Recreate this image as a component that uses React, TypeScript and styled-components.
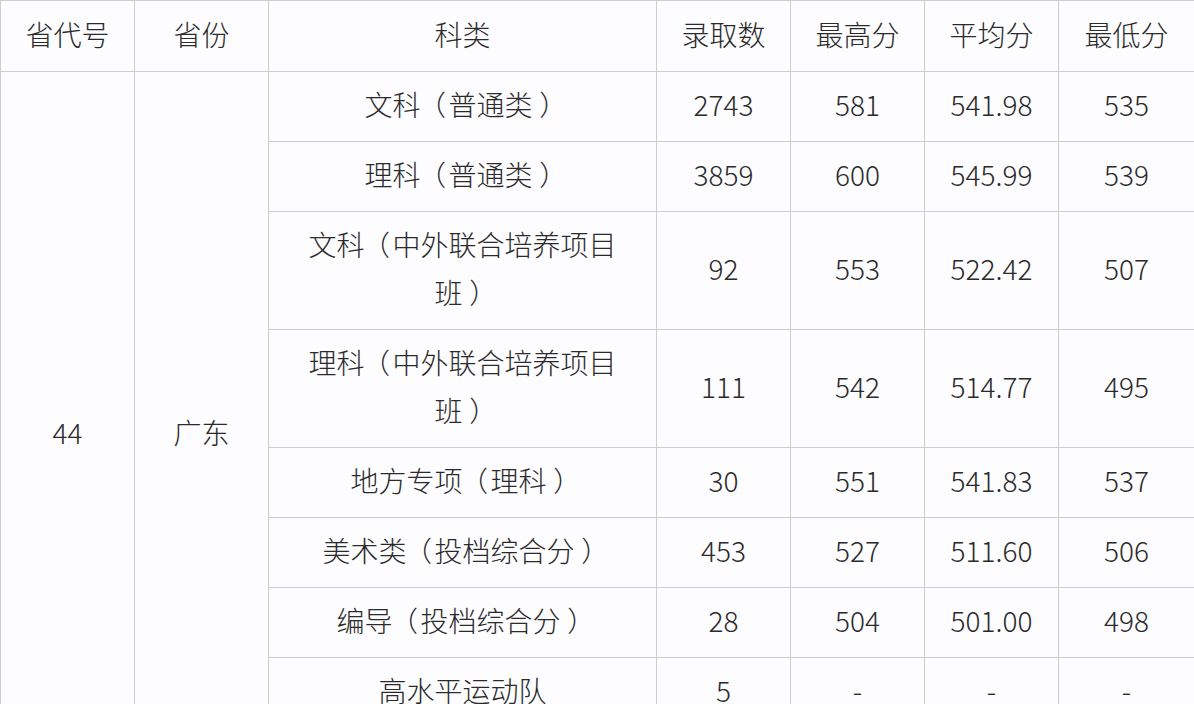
import React from "react";
import styled, { createGlobalStyle } from "styled-components";

const Global = createGlobalStyle`
  html, body { margin: 0; padding: 0; background: #fdfcfe; overflow: hidden; }
  body { font-family: "Noto Sans CJK SC", "Noto Sans", sans-serif; color: #2a2a2a; }
`;

const Table = styled.table`
  width: 1194px;
  border-collapse: collapse;
  table-layout: fixed;
  background: #fdfcfe;
`;

const Cell = styled.td<{ $wide?: boolean }>`
  border: 1px solid #cecbd2;
  padding: 8px ${(p) => (p.$wide ? "30px" : "4px")} 13px;
  font-size: 28px;
  line-height: 48px;
  text-align: center;
  vertical-align: middle;
  font-weight: 300;
  color: #2a2a2a;
  word-break: break-all;
`;

const HeadCell = styled(Cell).attrs({ as: "th" })`
  padding-top: 9px;
  font-weight: 300;
`;

const Paren = styled.span<{ $close?: boolean }>`
  display: inline-block;
  width: 1em;
  text-indent: ${(p) => (p.$close ? "0.24em" : "-0.18em")};
  white-space: nowrap;
`;

function Label({ text }: { text: string }) {
  const parts = text.split(/([（）])/).filter(Boolean);
  return (
    <>
      {parts.map((p, i) =>
        p === "（" ? (
          <Paren key={i}>（</Paren>
        ) : p === "）" ? (
          <Paren key={i} $close>
            ）
          </Paren>
        ) : (
          <React.Fragment key={i}>{p}</React.Fragment>
        )
      )}
    </>
  );
}

type Row = { name: string; n: string; max: string; avg: string; min: string };

const rows: Row[] = [
  { name: "文科（普通类）", n: "2743", max: "581", avg: "541.98", min: "535" },
  { name: "理科（普通类）", n: "3859", max: "600", avg: "545.99", min: "539" },
  { name: "文科（中外联合培养项目班）", n: "92", max: "553", avg: "522.42", min: "507" },
  { name: "理科（中外联合培养项目班）", n: "111", max: "542", avg: "514.77", min: "495" },
  { name: "地方专项（理科）", n: "30", max: "551", avg: "541.83", min: "537" },
  { name: "美术类（投档综合分）", n: "453", max: "527", avg: "511.60", min: "506" },
  { name: "编导（投档综合分）", n: "28", max: "504", avg: "501.00", min: "498" },
  { name: "高水平运动队", n: "5", max: "-", avg: "-", min: "-" },
  { name: "高水平艺术团", n: "3", max: "-", avg: "-", min: "-" },
];

export default function App() {
  return (
    <>
      <Global />
      <Table>
        <colgroup>
          <col style={{ width: 134 }} />
          <col style={{ width: 134 }} />
          <col style={{ width: 388 }} />
          <col style={{ width: 134 }} />
          <col style={{ width: 134 }} />
          <col style={{ width: 134 }} />
          <col style={{ width: 136 }} />
        </colgroup>
        <thead>
          <tr>
            <HeadCell>省代号</HeadCell>
            <HeadCell>省份</HeadCell>
            <HeadCell>科类</HeadCell>
            <HeadCell>录取数</HeadCell>
            <HeadCell>最高分</HeadCell>
            <HeadCell>平均分</HeadCell>
            <HeadCell>最低分</HeadCell>
          </tr>
        </thead>
        <tbody>
          {rows.map((r, i) => (
            <tr key={i}>
              {i === 0 && (
                <>
                  <Cell rowSpan={rows.length}>44</Cell>
                  <Cell rowSpan={rows.length}>广东</Cell>
                </>
              )}
              <Cell $wide>
                <Label text={r.name} />
              </Cell>
              <Cell>{r.n}</Cell>
              <Cell>{r.max}</Cell>
              <Cell>{r.avg}</Cell>
              <Cell>{r.min}</Cell>
            </tr>
          ))}
        </tbody>
      </Table>
    </>
  );
}
